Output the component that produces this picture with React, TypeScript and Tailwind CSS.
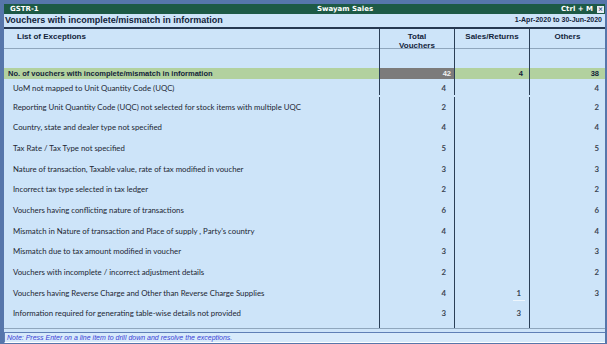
const rows: [string, string, string, string][] = [
  ['UoM not mapped to Unit Quantity Code (UQC)', '4', '', '4'],
  ['Reporting Unit Quantity Code (UQC) not selected for stock items with multiple UQC', '2', '', '2'],
  ['Country, state and dealer type not specified', '4', '', '4'],
  ['Tax Rate / Tax Type not specified', '5', '', '5'],
  ['Nature of transaction, Taxable value, rate of tax modified in voucher', '3', '', '3'],
  ['Incorrect tax type selected in tax ledger', '2', '', '2'],
  ['Vouchers having conflicting nature of transactions', '6', '', '6'],
  ["Mismatch in Nature of transaction and Place of supply , Party's country", '4', '', '4'],
  ['Mismatch due to tax amount modified in voucher', '3', '', '3'],
  ['Vouchers with incomplete / incorrect adjustment details', '2', '', '2'],
  ['Vouchers having Reverse Charge and Other than Reverse Charge Supplies', '4', '1', '3'],
  ['Information required for generating table-wise details not provided', '3', '3', ''],
];

const grid = 'grid grid-cols-[375px_75px_75px_1fr]';
const col = 'border-l border-[#2b3f57]';

export default function App() {
  return (
    <div className="w-[607px] h-[344px] overflow-hidden bg-[#5676ab] pt-[4px] pl-[4px] pr-[2px] pb-[1px] flex flex-col font-['Liberation_Sans',sans-serif]">
      {/* title bar */}
      <div className="h-[10px] shrink-0 bg-[#1d5a46] flex items-center text-white font-bold text-[7px] leading-none relative font-['DejaVu_Sans',sans-serif]">
        <span className="pl-[6px]">GSTR-1</span>
        <span className="absolute left-[313px]">Swayam Sales</span>
        <span className="ml-auto pr-[4px]">Ctrl + M</span>
        <span className="w-[7px] h-[7px] bg-[#e8eef6] text-[#1d3a6a] text-[6px] flex items-center justify-center mr-[1px]">×</span>
      </div>

      <div className="flex-1 bg-[#cde4f9] flex flex-col text-[#12233a]">
        {/* subtitle */}
        <div className="h-[15px] shrink-0 flex items-center justify-between px-[1px] font-bold text-[9px] border-b-2 border-[#263850]">
          <span>Vouchers with incomplete/mismatch in information</span>
          <span className="pr-[2px] text-[7px]">1-Apr-2020 to 30-Jun-2020</span>
        </div>

        {/* header */}
        <div className={`${grid} h-[20px] shrink-0 border-b border-[#8fa6bd] font-bold text-[8px] leading-[9px]`}>
          <div className="pl-[13px] pt-[3px]">List of Exceptions</div>
          <div className={`${col} text-center pt-[3px]`}>Total<br />Vouchers</div>
          <div className={`${col} text-center pt-[3px]`}>Sales/Returns</div>
          <div className={`${col} text-center pt-[3px]`}>Others</div>
        </div>

        <div className={`${grid} h-[19px] shrink-0`}>
          <div />
          <div className={col} />
          <div className={col} />
          <div className={col} />
        </div>

        {/* summary row */}
        <div className={`${grid} h-[11px] shrink-0 bg-[#b2d19f] font-bold text-[7.5px] items-stretch`}>
          <div className="pl-[4px] flex items-center">No. of vouchers with incomplete/mismatch in information</div>
          <div className={`${col} bg-[#7c7b7b] text-[#f2f2f2] flex items-center justify-end pr-[3px]`}>42</div>
          <div className={`${col} flex items-center justify-end pr-[6px]`}>4</div>
          <div className={`${col} flex items-center justify-end pr-[6px]`}>38</div>
        </div>

        {/* exception rows */}
        <div className="flex flex-col shrink-0 font-['Lato',sans-serif] text-[7.8px] text-[#1c2633]">
          {rows.map((r, i) => (
            <div key={i} className={`${grid} ${i === 0 ? 'h-[18px] items-end pb-[2px]' : 'h-[20.7px] items-center'}`}>
              <div className="pl-[9px] whitespace-nowrap">{r[0]}</div>
              <div className={`${col} h-full flex ${i === 0 ? 'items-end' : 'items-center'} justify-end pr-[8px] font-bold text-[#3b4552]`}>{r[1]}</div>
              <div className={`${col} h-full flex ${i === 0 ? 'items-end' : 'items-center'} justify-end pr-[8px] font-bold text-[#3b4552] relative`}>
                {r[2]}
                {i === 10 && <span className="absolute bottom-[3px] right-[4px] w-[12px] h-px bg-[#eef6fd]" />}
              </div>
              <div className={`${col} h-full flex ${i === 0 ? 'items-end' : 'items-center'} justify-end pr-[6px] font-bold text-[#3b4552]`}>{r[3]}</div>
            </div>
          ))}
        </div>

        <div className={`${grid} flex-1 border-b border-[#8fa6bd]`}>
          <div />
          <div className={col} />
          <div className={col} />
          <div className={col} />
        </div>
        <div className="h-[3px] shrink-0" />

        {/* note */}
        <div className="h-[11px] shrink-0 border-t border-l border-[#5f7fb6] border-b border-b-white bg-[#d7eafb] flex items-center pl-[2px] italic text-[7px] leading-none text-[#3a3fd6]">
          Note: Press Enter on a line item to drill down and resolve the exceptions.
        </div>
      </div>
    </div>
  );
}
